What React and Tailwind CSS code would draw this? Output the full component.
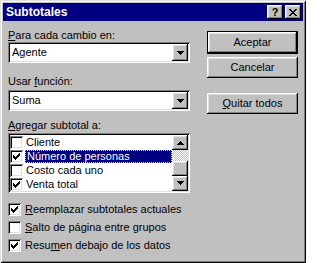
import React from 'react';

const raised =
  'bg-[#c0c0c0] shadow-[inset_-1px_-1px_#000,inset_1px_1px_#fff,inset_-2px_-2px_#808080,inset_2px_2px_#dfdfdf]';
const sunken =
  'bg-white shadow-[inset_1px_1px_#808080,inset_-1px_-1px_#fff,inset_2px_2px_#000,inset_-2px_-2px_#dfdfdf]';

const Check = ({ on }) => (
  <div className={`w-[13px] h-[13px] shrink-0 relative ${sunken}`}>
    {on && (
      <svg className="absolute left-[3px] top-[3px]" width="7" height="7" viewBox="0 0 7 7" shapeRendering="crispEdges">
        <g fill="#000">
          <rect x="6" y="0" width="1" height="1" />
          <rect x="5" y="1" width="2" height="1" />
          <rect x="0" y="2" width="1" height="1" />
          <rect x="4" y="2" width="3" height="1" />
          <rect x="0" y="3" width="2" height="1" />
          <rect x="3" y="3" width="3" height="1" />
          <rect x="0" y="4" width="5" height="1" />
          <rect x="1" y="5" width="3" height="1" />
          <rect x="2" y="6" width="1" height="1" />
        </g>
      </svg>
    )}
  </div>
);

const Arrow = ({ up }) => (
  <svg width="7" height="4" viewBox="0 0 7 4" shapeRendering="crispEdges">
    <polygon fill="#000" points={up ? '3.5,0 7,4 0,4' : '0,0 7,0 3.5,4'} />
  </svg>
);

const Combo = ({ value, className = '' }) => (
  <div className={`h-[21px] w-full flex items-center pl-[4px] pr-[2px] ${sunken} ${className}`}>
    <span className="flex-1">{value}</span>
    <div className={`w-[16px] h-[17px] flex items-center justify-center ${raised}`}>
      <Arrow />
    </div>
  </div>
);

const Button = ({ children, className = '' }) => (
  <div className={`h-[21px] w-full flex items-center justify-center ${raised} ${className}`}>{children}</div>
);

const items = [
  { label: 'Cliente', on: false },
  { label: 'Número de personas', on: true, selected: true },
  { label: 'Costo cada uno', on: false },
  { label: 'Venta total', on: true },
];

export default function App() {
  return (
    <div className="w-[306px] h-[263px] p-[3px] bg-[#c0c0c0] text-black text-[11px] leading-[13px] font-['Liberation_Sans',Arial,sans-serif] shadow-[inset_1px_1px_#dfdfdf,inset_-1px_-1px_#000,inset_2px_2px_#fff,inset_-2px_-2px_#808080] flex flex-col">
      {/* title bar */}
      <div className="h-[18px] bg-[#000080] flex items-center pl-[3px] pr-[2px]">
        <span className="flex-1 text-white font-bold text-[12px]">Subtotales</span>
        <div className={`w-[16px] h-[14px] flex items-center justify-center font-bold text-[11px] leading-none ${raised}`}>?</div>
        <div className={`w-[16px] h-[14px] ml-[2px] flex items-center justify-center ${raised}`}>
          <svg width="8" height="7" viewBox="0 0 8 7" shapeRendering="crispEdges">
            <g fill="#000">
              <rect x="0" y="0" width="2" height="1" /><rect x="6" y="0" width="2" height="1" />
              <rect x="1" y="1" width="2" height="1" /><rect x="5" y="1" width="2" height="1" />
              <rect x="2" y="2" width="4" height="1" />
              <rect x="3" y="3" width="2" height="1" />
              <rect x="2" y="4" width="4" height="1" />
              <rect x="1" y="5" width="2" height="1" /><rect x="5" y="5" width="2" height="1" />
              <rect x="0" y="6" width="2" height="1" /><rect x="6" y="6" width="2" height="1" />
            </g>
          </svg>
        </div>
      </div>

      <div className="flex pl-[5px]">
        {/* left column */}
        <div className="w-[182px] flex flex-col">
          <div className="mt-[8px] h-[13px]"><u>P</u>ara cada cambio en:</div>
          <Combo value="Agente" />
          <div className="mt-[12px] h-[13px]">Usar <u>f</u>unción:</div>
          <Combo value="Suma" className="mt-[2px]" />
          <div className="mt-[8px] h-[13px]"><u>A</u>gregar subtotal a:</div>

          <div className={`mt-px h-[60px] p-[2px] flex ${sunken}`}>
            <div className="flex-1 flex flex-col">
              {items.map((it) => (
                <div key={it.label} className="h-[14px] flex items-center">
                  <Check on={it.on} />
                  <span
                    className={`ml-[2px] flex-1 h-[13px] pl-px ${
                      it.selected ? 'bg-[#000080] text-white border border-dotted border-[#e8e880] leading-[11px]' : ''
                    }`}
                  >
                    {it.label}
                  </span>
                </div>
              ))}
            </div>
            <div className="w-[16px] flex flex-col">
              <div className={`h-[16px] flex items-center justify-center ${raised}`}><Arrow up /></div>
              <div className="h-[11px] bg-[image:repeating-conic-gradient(#c0c0c0_0%_25%,#fff_0%_50%)] bg-[length:2px_2px]" />
              <div className={`h-[15px] ${raised}`} />
              <div className={`h-[16px] flex items-center justify-center ${raised}`}><Arrow /></div>
            </div>
          </div>

          <div className="mt-[7px] flex flex-col">
            <div className="h-[18px] flex items-center gap-[4px]"><Check on /><span><u>R</u>eemplazar subtotales actuales</span></div>
            <div className="h-[18px] flex items-center gap-[4px]"><Check /><span><u>S</u>alto de página entre grupos</span></div>
            <div className="h-[18px] flex items-center gap-[4px]"><Check on /><span>Resu<u>m</u>en debajo de los datos</span></div>
          </div>
        </div>

        {/* right column */}
        <div className="w-[91px] ml-[17px] flex flex-col">
          <div className="mt-[10px] border border-black">
            <Button>Aceptar</Button>
          </div>
          <Button className="mt-[3px]">Cancelar</Button>
          <Button className="mt-[15px]"><span><u>Q</u>uitar todos</span></Button>
        </div>
      </div>
    </div>
  );
}
